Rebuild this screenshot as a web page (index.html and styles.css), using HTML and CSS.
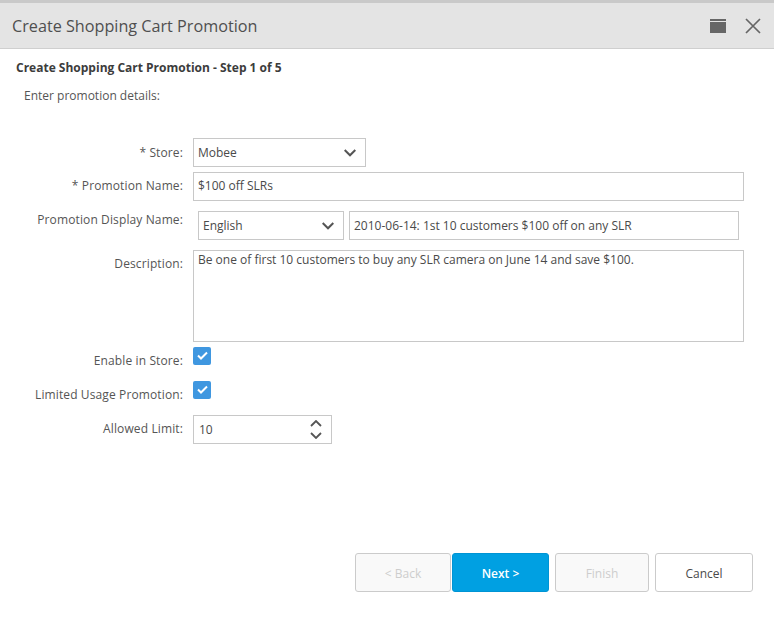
FILE: index.html
```html
<!DOCTYPE html>
<html lang="en">
<head>
<meta charset="utf-8">
<title>Create Shopping Cart Promotion</title>
<link rel="stylesheet" href="styles.css">
</head>
<body>
<div class="dialog">
  <header class="titlebar">
    <h1 class="title">Create Shopping Cart Promotion</h1>
    <div class="window-actions">
      <svg class="icon-max" width="17" height="15" viewBox="0 0 17 15"><path fill="#666" d="M0 0h16v2H0zM0 3h16v11H0z"/></svg>
      <svg class="icon-close" width="16" height="16" viewBox="0 0 16 16"><path fill="none" stroke="#666" stroke-width="1.7" d="M1 1l14 14M15 1L1 15"/></svg>
    </div>
  </header>
  <main class="content">
    <h2 class="step">Create Shopping Cart Promotion - Step 1 of 5</h2>
    <p class="intro">Enter promotion details:</p>
    <form class="form">
      <div class="row row-store">
        <label class="label label-store">* Store:</label>
        <div class="field select select-store"><span>Mobee</span><svg class="chev" width="12" height="8" viewBox="0 0 12 8"><path fill="none" stroke="#555" stroke-width="2" d="M.7 1l5.300 5.300L11.300 1"/></svg></div>
      </div>
      <div class="row row-name">
        <label class="label">* Promotion Name:</label>
        <div class="field input-wide">$100 off SLRs</div>
      </div>
      <div class="row row-display">
        <label class="label label-display">Promotion Display Name:</label>
        <div class="display-group">
          <div class="field select select-lang"><span>English</span><svg class="chev" width="12" height="8" viewBox="0 0 12 8"><path fill="none" stroke="#555" stroke-width="2" d="M.7 1l5.300 5.300L11.300 1"/></svg></div>
          <div class="field input-display">2010-06-14: 1st 10 customers $100 off on any SLR</div>
        </div>
      </div>
      <div class="row row-desc">
        <label class="label">Description:</label>
        <div class="field textarea">Be one of first 10 customers to buy any SLR camera on June 14 and save $100.</div>
      </div>
      <div class="row row-check row-enable">
        <label class="label">Enable in Store:</label>
        <span class="checkbox"><svg width="11" height="9" viewBox="0 0 11 9"><path fill="none" stroke="#fff" stroke-width="2" d="M1 4.500l3 3L10 1.500"/></svg></span>
      </div>
      <div class="row row-check row-limited">
        <label class="label">Limited Usage Promotion:</label>
        <span class="checkbox"><svg width="11" height="9" viewBox="0 0 11 9"><path fill="none" stroke="#fff" stroke-width="2" d="M1 4.500l3 3L10 1.500"/></svg></span>
      </div>
      <div class="row row-limit">
        <label class="label">Allowed Limit:</label>
        <div class="field spinner"><span>10</span>
          <span class="spin-arrows">
            <svg width="12" height="7" viewBox="0 0 12 7"><path fill="none" stroke="#555" stroke-width="1.800" d="M1 6l5-5 5 5"/></svg>
            <svg width="12" height="7" viewBox="0 0 12 7"><path fill="none" stroke="#555" stroke-width="1.800" d="M1 1l5 5 5-5"/></svg>
          </span>
        </div>
      </div>
    </form>
  </main>
  <footer class="footer">
    <button class="btn btn-back" type="button" disabled>&lt; Back</button>
    <button class="btn btn-next" type="button">Next &gt;</button>
    <button class="btn btn-finish" type="button" disabled>Finish</button>
    <button class="btn btn-cancel" type="button">Cancel</button>
  </footer>
</div>
</body>
</html>
```
FILE: styles.css
```css
* { box-sizing: border-box; }
html, body { margin: 0; padding: 0; }
body {
  width: 774px;
  height: 617px;
  overflow: hidden;
  background: #fff;
  font-family: "Open Sans", "Liberation Sans", sans-serif;
  font-size: 12px;
  color: #4a4a4a;
}
.dialog {
  height: 617px;
  display: flex;
  flex-direction: column;
  border-top: 3px solid #c9c9c9;
}
.titlebar {
  height: 46px;
  flex: none;
  display: flex;
  align-items: center;
  justify-content: space-between;
  background: #e4e4e4;
  border-bottom: 1px solid #cfcfcf;
  padding: 0 13px 0 12px;
}
.title {
  margin: 0;
  font-size: 16.2px;
  font-weight: 400;
  color: #4f4f4f;
}
.window-actions {
  display: flex;
  align-items: center;
  gap: 18px;
}
.window-actions svg { display: block; }
.icon-max { margin-top: 1px; }
.icon-close { margin-top: 1px; }
.content {
  flex: 1;
  padding: 11px 30px 0 0;
}
.step {
  margin: 0 0 0 16px;
  font-size: 12px;
  line-height: 16px;
  font-weight: 700;
  color: #3c3c3c;
}
.intro {
  margin: 12px 0 0 24px;
  font-size: 12px;
  line-height: 16px;
  color: #555;
}
.form { margin-top: 34px; }
.row {
  display: flex;
  align-items: flex-start;
}
.row-name { margin-top: 5px; }
.row-display { margin-top: 10px; }
.row-desc { margin-top: 10px; }
.row-check { height: 18px; }
.row-enable { margin-top: 5px; }
.row-limited { margin-top: 16px; }
.row-limit { margin-top: 16px; }
.label {
  flex: none;
  width: 183px;
  margin-right: 10px;
  text-align: right;
  font-size: 12px;
  line-height: 16px;
  letter-spacing: 0.12px;
  padding-top: 6px;
  color: #555;
}
.label-store { padding-top: 7px; }
.label-display { padding-top: 1px; }
.field {
  height: 29px;
  border: 1px solid #c8c8c8;
  background: #fff;
  display: flex;
  align-items: center;
  padding: 0 4px;
  font-size: 12px;
  color: #4a4a4a;
}
.select { justify-content: space-between; padding-right: 9px; }
.select-store { width: 173px; }
.input-wide { width: 551px; padding-bottom: 2px; }
.display-group {
  display: flex;
  gap: 5px;
  margin-left: 5px;
}
.select-lang { width: 146px; }
.input-display { width: 390px; }
.textarea {
  width: 551px;
  height: 92px;
  align-items: flex-start;
  padding: 1px 4px 0;
  line-height: 16px;
}
.checkbox {
  width: 18px;
  height: 18px;
  border-radius: 2px;
  background: #3f97e0;
  display: flex;
  align-items: center;
  justify-content: center;
  padding-bottom: 2px;
}
.spinner {
  width: 139px;
  justify-content: space-between;
  padding: 0 9px 0 5px;
}
.spin-arrows {
  display: flex;
  flex-direction: column;
  gap: 5px;
}
.spin-arrows svg, .chev, .checkbox svg { display: block; }
.footer {
  flex: none;
  height: 64px;
  padding: 0 21px 25px 355px;
  display: flex;
  align-items: flex-start;
}
.btn {
  height: 39px;
  padding: 2px 0 0;
  border: 1px solid #cbcbcb;
  border-radius: 3px;
  background: #fff;
  font: 400 12px "Open Sans", "Liberation Sans", sans-serif;
  color: #4a4a4a;
}
.btn-back { width: 96px; margin-right: 1px; background: #f9f9f9; color: #cdcdcd; }
.btn-next { width: 97px; margin-right: 6px; background: #00a0e2; border-color: #0094d4; color: #fff; font-weight: 600; }
.btn-finish { width: 94px; margin-right: 6px; background: #f9f9f9; color: #cdcdcd; }
.btn-cancel { width: 98px; }
```
